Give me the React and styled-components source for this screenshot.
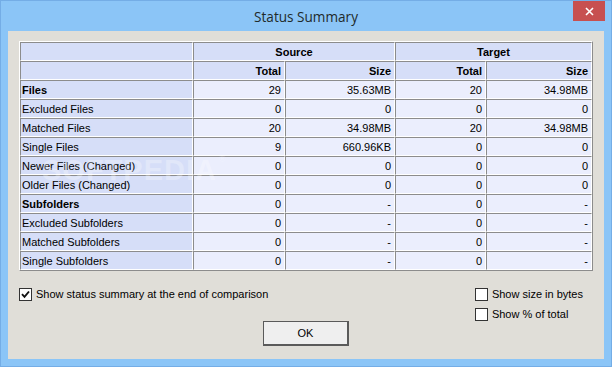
import React from "react";
import styled, { createGlobalStyle } from "styled-components";

const GlobalStyle = createGlobalStyle`
  html, body { margin: 0; padding: 0; }
  body {
    width: 612px; height: 367px; overflow: hidden;
    background: #8bc5f7;
    font-family: "Liberation Sans", Arial, sans-serif;
  }
`;

const Window = styled.div`
  width: 612px; height: 367px; box-sizing: border-box;
  background: #8bc5f7;
  border: 1px solid #74ade6;
  padding: 0 7px 7px;
  display: flex; flex-direction: column;
`;

const TitleBar = styled.div`
  height: 30px;
  display: grid;
  grid-template-columns: 1fr auto 1fr;
  align-items: start;
`;

const Title = styled.div`
  grid-column: 2;
  align-self: center;
  font-family: "Open Sans", "Noto Sans", sans-serif;
  font-size: 13.6px;
  color: #1f2a2a;
  padding-top: 0px;
`;

const CloseButton = styled.div`
  grid-column: 3;
  justify-self: end;
  width: 32px; height: 20px;
  margin-right: -1px;
  background: #c75050;
  display: flex; align-items: center; justify-content: center;
`;

const Client = styled.div`
  flex: 1;
  background: #e0ded8;
  padding: 10px 11px 0;
  display: flex; flex-direction: column;
  position: relative;
`;

const Grid = styled.div`
  width: 574px; box-sizing: border-box;
  display: grid;
  grid-template-columns: 173px 92px 110px 91px 106px;
  grid-auto-rows: 19px;
  border-top: 1px solid #ffffff;
  border-left: 1px solid #ffffff;
  border-right: 1px solid #8c8c8c;
  border-bottom: 1px solid #8c8c8c;
`;

const Cell = styled.div`
  box-sizing: border-box;
  grid-column: ${(p) => (p.$span ? `span ${p.$span}` : "auto")};
  border-top: 1px solid #8c8c8c;
  border-left: 1px solid #8c8c8c;
  border-bottom: 1px solid #ffffff;
  border-right: 1px solid #ffffff;
  background: ${(p) => (p.$head ? "#d6def8" : "#ebeefd")};
  font-size: 11px;
  line-height: 16px;
  padding-top: 1px;
  color: #000;
  font-weight: ${(p) => (p.$bold ? 700 : 400)};
  text-align: ${(p) => p.$align || "right"};
  padding-left: ${(p) => (p.$align === "left" ? "1px" : "0")};
  padding-right: ${(p) => (p.$align ? "0" : "3px")};
  white-space: nowrap;
  overflow: hidden;
`;

const Watermark = styled.div`
  position: absolute;
  left: 34px; top: 123px;
  font-family: "Liberation Sans", Arial, sans-serif;
  font-weight: 700;
  font-size: 29px;
  letter-spacing: 1px;
  color: rgba(255, 255, 255, 0.28);
  pointer-events: none;
  sup { font-size: 9px; font-weight: 400; vertical-align: top; margin-left: 2px; }
`;

const Options = styled.div`
  display: grid;
  grid-template-columns: 1fr auto;
  row-gap: 6px;
  padding-top: 16px;
`;

const CheckRow = styled.label`
  display: flex; align-items: center; gap: 4px;
  font-size: 11px; color: #000;
  grid-column: ${(p) => p.$col};
  grid-row: ${(p) => p.$row};
  align-self: start;
  padding-right: ${(p) => (p.$col === 2 ? "10px" : "0")};
  height: 14px;
`;

const Box = styled.span`
  width: 13px; height: 13px; box-sizing: border-box;
  border: 1px solid #333;
  background: #fff;
  display: inline-flex; align-items: center; justify-content: center;
`;

const OkButton = styled.div`
  grid-column: 1 / -1;
  grid-row: 2;
  justify-self: center;
  margin-top: 14px;
  width: 86px; height: 25px; box-sizing: border-box;
  border: 1px solid #5a5a5a;
  border-right-width: 2px; border-bottom-width: 2px;
  background: #efefef;
  font-size: 11px; color: #000;
  display: flex; align-items: center; justify-content: center;
`;

const Check = ({ checked, label, col, row }) => (
  <CheckRow $col={col} $row={row}>
    <Box>
      {checked && (
        <svg width="9" height="9" viewBox="0 0 9 9">
          <path d="M1 4.2 L3.5 6.8 L8 1.5" fill="none" stroke="#111" strokeWidth="1.9" />
        </svg>
      )}
    </Box>
    {label}
  </CheckRow>
);

const rows = [
  ["Files", "29", "35.63MB", "20", "34.98MB", true],
  ["Excluded Files", "0", "0", "0", "0"],
  ["Matched Files", "20", "34.98MB", "20", "34.98MB"],
  ["Single Files", "9", "660.96KB", "0", "0"],
  ["Newer Files (Changed)", "0", "0", "0", "0"],
  ["Older Files (Changed)", "0", "0", "0", "0"],
  ["Subfolders", "0", "-", "0", "-", true],
  ["Excluded Subfolders", "0", "-", "0", "-"],
  ["Matched Subfolders", "0", "-", "0", "-"],
  ["Single Subfolders", "0", "-", "0", "-"],
];

export default function App() {
  return (
    <>
      <GlobalStyle />
      <Window>
        <TitleBar>
          <Title>Status Summary</Title>
          <CloseButton>
            <svg width="9" height="9" viewBox="0 0 9 9">
              <path d="M1 1 L8 8 M8 1 L1 8" stroke="#fff" strokeWidth="1.6" />
            </svg>
          </CloseButton>
        </TitleBar>
        <Client>
          <Grid>
            <Cell $head />
            <Cell $head $bold $span={2} $align="center">Source</Cell>
            <Cell $head $bold $span={2} $align="center">Target</Cell>
            <Cell $head />
            <Cell $head $bold>Total</Cell>
            <Cell $head $bold>Size</Cell>
            <Cell $head $bold>Total</Cell>
            <Cell $head $bold>Size</Cell>
            {rows.map(([label, a, b, c, d, bold]) => (
              <React.Fragment key={label}>
                <Cell $head $align="left" $bold={bold}>{label}</Cell>
                <Cell>{a}</Cell>
                <Cell>{b}</Cell>
                <Cell>{c}</Cell>
                <Cell>{d}</Cell>
              </React.Fragment>
            ))}
          </Grid>
          <Watermark>SOFTPEDIA<sup>®</sup></Watermark>
          <Options>
            <Check checked label="Show status summary at the end of comparison" col={1} row={1} />
            <Check label="Show size in bytes" col={2} row={1} />
            <Check label="Show % of total" col={2} row={2} />
            <OkButton>OK</OkButton>
          </Options>
        </Client>
      </Window>
    </>
  );
}
